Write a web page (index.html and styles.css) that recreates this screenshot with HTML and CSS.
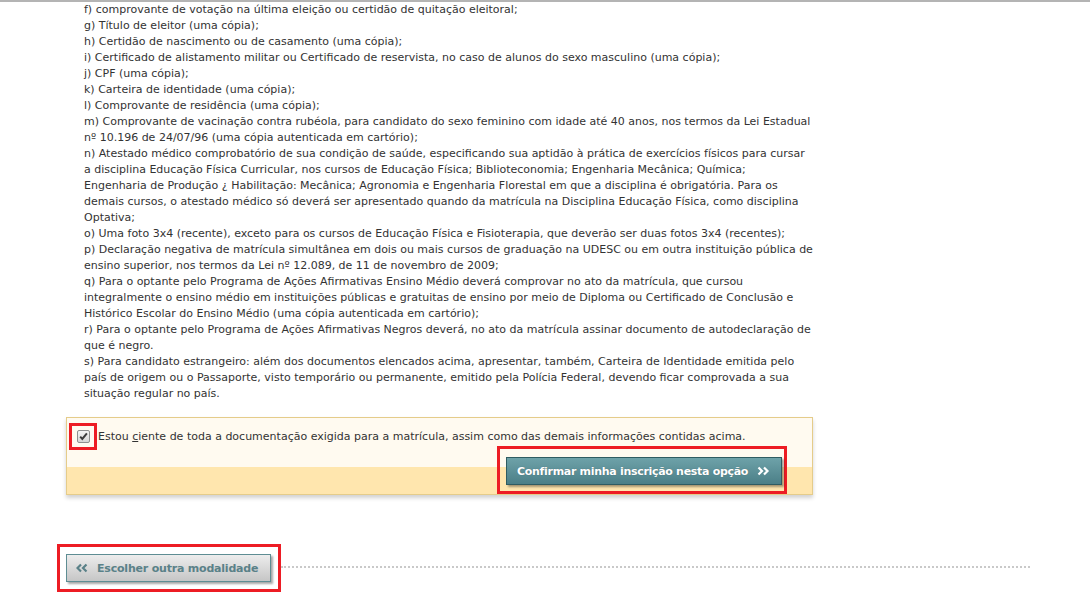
FILE: index.html
```html
<!DOCTYPE html>
<html lang="pt-BR">
<head>
<meta charset="utf-8">
<title>Documentação para matrícula</title>
<link rel="stylesheet" href="styles.css">
</head>
<body>
<div class="page">
  <div class="docs">
    <p>f) comprovante de votação na última eleição ou certidão de quitação eleitoral;<br>
    g) Título de eleitor (uma cópia);<br>
    h) Certidão de nascimento ou de casamento (uma cópia);<br>
    i) Certificado de alistamento militar ou Certificado de reservista, no caso de alunos do sexo masculino (uma cópia);<br>
    j) CPF (uma cópia);<br>
    k) Carteira de identidade (uma cópia);<br>
    l) Comprovante de residência (uma cópia);<br>
    m) Comprovante de vacinação contra rubéola, para candidato do sexo feminino com idade até 40 anos, nos termos da Lei Estadual<br>nº 10.196 de 24/07/96 (uma cópia autenticada em cartório);<br>
    n) Atestado médico comprobatório de sua condição de saúde, especificando sua aptidão à prática de exercícios físicos para cursar<br>a disciplina Educação Física Curricular, nos cursos de Educação Física; Biblioteconomia; Engenharia Mecânica; Química;<br>Engenharia de Produção ¿ Habilitação: Mecânica; Agronomia e Engenharia Florestal em que a disciplina é obrigatória. Para os<br>demais cursos, o atestado médico só deverá ser apresentado quando da matrícula na Disciplina Educação Física, como disciplina<br>Optativa;<br>
    o) Uma foto 3x4 (recente), exceto para os cursos de Educação Física e Fisioterapia, que deverão ser duas fotos 3x4 (recentes);<br>
    p) Declaração negativa de matrícula simultânea em dois ou mais cursos de graduação na UDESC ou em outra instituição pública de<br>ensino superior, nos termos da Lei nº 12.089, de 11 de novembro de 2009;<br>
    q) Para o optante pelo Programa de Ações Afirmativas Ensino Médio deverá comprovar no ato da matrícula, que cursou<br>integralmente o ensino médio em instituições públicas e gratuitas de ensino por meio de Diploma ou Certificado de Conclusão e<br>Histórico Escolar do Ensino Médio (uma cópia autenticada em cartório);<br>
    r) Para o optante pelo Programa de Ações Afirmativas Negros deverá, no ato da matrícula assinar documento de autodeclaração de<br>que é negro.<br>
    s) Para candidato estrangeiro: além dos documentos elencados acima, apresentar, também, Carteira de Identidade emitida pelo<br>país de origem ou o Passaporte, visto temporário ou permanente, emitido pela Polícia Federal, devendo ficar comprovada a sua<br>situação regular no país.</p>
  </div>

  <div class="notice">
    <label class="agree">
      <span class="mark mark-check">
        <span class="checkbox" role="checkbox" aria-checked="true">
          <svg viewBox="0 0 11 11" width="11" height="11" aria-hidden="true"><path d="M2.2 5.6 L4.3 7.9 L8.9 2.4" fill="none" stroke="#3c3c3c" stroke-width="2"/></svg>
        </span>
      </span>
      <span class="agree-text">Estou <u>c</u>iente de toda a documentação exigida para a matrícula, assim como das demais informações contidas acima.</span>
    </label>
    <div class="actions">
      <span class="mark mark-confirm">
        <button class="btn btn-confirm" type="button">Confirmar minha inscrição nesta opção<svg class="chev" viewBox="0 0 13 10" width="13" height="10" aria-hidden="true"><path d="M1.5 1.5 L5 5 L1.5 8.5 M7 1.5 L10.5 5 L7 8.5" fill="none" stroke="#ffffff" stroke-width="2.2"/></svg></button>
      </span>
    </div>
  </div>

  <div class="back-row">
    <span class="mark mark-back">
      <button class="btn btn-back" type="button"><svg class="chev" viewBox="0 0 12 10" width="12" height="10" aria-hidden="true"><path d="M5 1.5 L1.5 5 L5 8.5 M10.5 1.5 L7 5 L10.5 8.5" fill="none" stroke="#5a8188" stroke-width="2.2"/></svg>Escolher outra modalidade</button>
    </span>
    <div class="dots"></div>
  </div>
</div>
</body>
</html>
```

FILE: styles.css
```css
* { box-sizing: border-box; }

html, body {
  margin: 0;
  padding: 0;
  background: #ffffff;
}

body {
  font-family: Verdana, "DejaVu Sans", sans-serif;
  font-size: 11px;
  color: #333333;
  overflow: hidden;
}

.page {
  border-top: 2px solid #b4b4b4;
  height: 592px;
}

.docs {
  margin-left: 84px;
  width: 740px;
}

.docs p {
  margin: 0;
  line-height: 16px;
  white-space: nowrap;
}

.notice {
  margin: 15px 0 0 66px;
  width: 747px;
  border: 1px solid #e5cc8a;
  background: linear-gradient(#fffaf0 0, #fffaf0 49px, #ffe6ae 49px, #ffe6ae 100%);
  box-shadow: 0 3px 4px rgba(0, 0, 0, 0.18);
  padding: 5px 25px 0 2px;
}

.agree {
  display: flex;
  align-items: center;
  gap: 1px;
  cursor: pointer;
}

.mark {
  display: inline-flex;
  border: 3px solid #ed1c24;
}

.mark-check {
  padding: 4px 4px 4px 5px;
}

.checkbox {
  display: inline-flex;
  align-items: center;
  justify-content: center;
  width: 13px;
  height: 13px;
  border: 1px solid #8e8f8f;
  border-radius: 2px;
  background: linear-gradient(#f4f4f4, #d6d6d6);
}

.agree-text {
  line-height: 16px;
}

.actions {
  display: flex;
  justify-content: flex-end;
  margin-top: -4px;
}

.mark-confirm {
  padding: 8px 2px 6px 6px;
}

.btn {
  font-family: Verdana, "DejaVu Sans", sans-serif;
  font-weight: bold;
  font-size: 11px;
  height: 28px;
  border-radius: 0;
  cursor: pointer;
  box-shadow: 2px 2px 2px rgba(0, 0, 0, 0.35);
  display: inline-flex;
  align-items: center;
  white-space: nowrap;
}

.btn-confirm {
  width: 276px;
  padding: 0 0 0 10px;
  color: #ffffff;
  border: 1px solid #2f5c62;
  background: linear-gradient(#6ea2a9, #4b7f87);
  text-shadow: 0 0 1px rgba(0, 0, 0, 0.3);
  letter-spacing: -0.3px;
}

.btn-confirm .chev {
  margin-left: 9px;
}

.back-row {
  display: flex;
  align-items: center;
  margin: 49px 0 0 57px;
  width: 973px;
}

.mark-back {
  padding: 7px 7px 7px 6px;
}

.btn-back {
  width: 205px;
  padding: 0 0 0 9px;
  color: #5a8188;
  border: 1px solid #5e8d93;
  background: linear-gradient(#ededed, #c6c6c6);
  letter-spacing: -0.2px;
}

.btn-back .chev {
  margin-right: 9px;
}

.dots {
  flex: 1;
  border-top: 2px dotted #c9c9c9;
  margin-top: -2px;
}
```
